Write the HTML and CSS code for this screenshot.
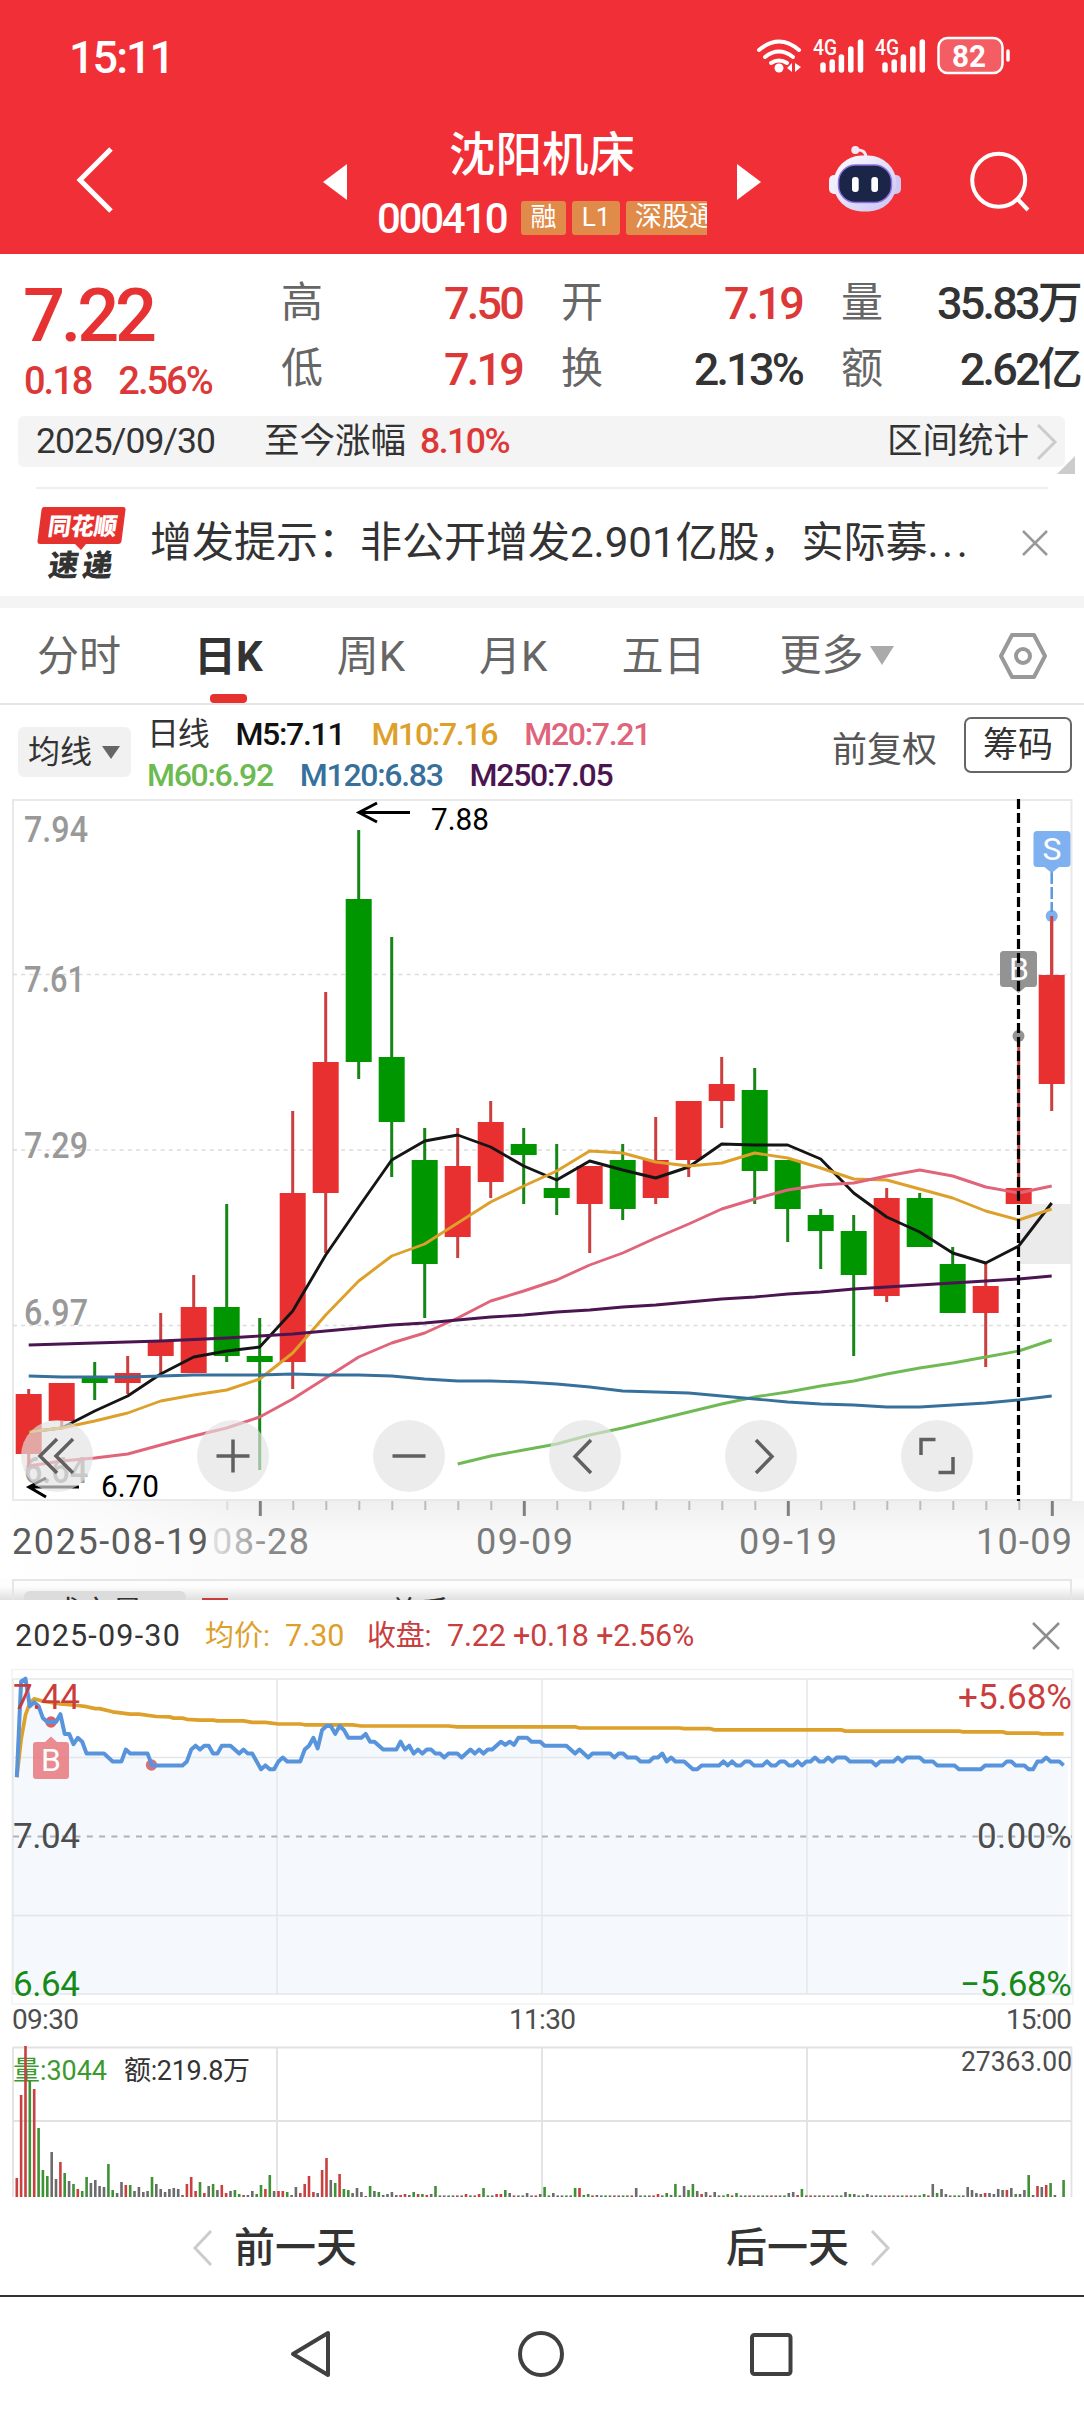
FILE: index.html
```html
<!DOCTYPE html>
<html lang="zh-CN">
<head>
    <meta charset="UTF-8">
    <meta name="viewport" content="width=device-width, initial-scale=1.0">
    <title>沈阳机床 000410</title>
    <link rel="stylesheet" href="styles.css">
</head>
<body>
    <header class="top">
        <div class="status">
            <span class="clock">15:11</span>
            <svg class="status-icons" width="260" height="44" viewBox="754 34 260 44">
                <g fill="none" stroke="#fff" stroke-width="4" stroke-linecap="round">
                    <path d="M759 50Q779 33 799 50"/>
                    <path d="M765 57Q779 46 793 57"/>
                    <path d="M771 63Q779 58 787 63"/>
                </g>
                <circle cx="779" cy="68" r="4.5" fill="#fff"/>
                <path d="M792 63v9l-5-4zM795 63v9l6-5z" fill="#fff"/>
                <g fill="#fff">
                    <text x="813" y="55" font-size="22" font-weight="500" textLength="24" lengthAdjust="spacingAndGlyphs">4G</text>
                    <text x="875" y="55" font-size="22" font-weight="500" textLength="24" lengthAdjust="spacingAndGlyphs">4G</text>
                </g>
                <g stroke="#fff" stroke-width="5.5" stroke-linecap="round">
                    <path d="M823 65v5M832.2 62v8M841.4 57v13M850.8 49v21M860.5 42v28"/>
                    <path d="M885 65v5M894.2 62v8M903.4 57v13M912.8 49v21M922.3 42v28"/>
                </g>
                <rect x="938.5" y="38" width="64" height="35" rx="9" fill="#f35d63" stroke="#fff" stroke-width="2.5"/>
                <path d="M1008 51v9" stroke="#fff" stroke-width="3.5" stroke-linecap="round"/>
                <text x="952" y="67" font-size="31" font-weight="700" fill="#fff" textLength="34" lengthAdjust="spacingAndGlyphs">82</text>
            </svg>
        </div>
        <div class="navbar">
            <svg class="back" width="40" height="68" viewBox="0 0 40 68"><path d="M35 3L4 34L35 65" fill="none" stroke="#fff" stroke-width="5"/></svg>
            <svg class="prev" width="24" height="36" viewBox="0 0 24 36"><path d="M24 0v36L0 18z" fill="#fff"/></svg>
            <div class="stock">
                <div class="stock-name">沈阳机床</div>
                <div class="stock-sub">
                    <span class="code num">000410</span>
                    <span class="badge">融</span>
                    <span class="badge badge-l1">L1</span>
                    <span class="badge badge-cut">深股通</span>
                </div>
            </div>
            <svg class="next" width="24" height="36" viewBox="0 0 24 36"><path d="M0 0v36L24 18z" fill="#fff"/></svg>
            <svg class="robot" width="74" height="68" viewBox="828 145 74 68">
                <defs>
                    <linearGradient id="shell" x1="0" y1="0" x2="1" y2="1">
                        <stop offset="0" stop-color="#ffffff"/>
                        <stop offset="1" stop-color="#c9c2f2"/>
                    </linearGradient>
                </defs>
                <path d="M856 150Q866 149 866 158" fill="none" stroke="#f3e9f5" stroke-width="3"/>
                <circle cx="855.3" cy="150" r="4" fill="#f3e9f5"/>
                <rect x="829" y="175" width="12" height="19" rx="5" fill="#f0effc"/>
                <rect x="889" y="175" width="12" height="19" rx="5" fill="#cfc8f3"/>
                <rect x="833.5" y="155.5" width="63" height="56" rx="28" fill="url(#shell)"/>
                <rect x="838.5" y="165" width="53" height="37.5" rx="17" fill="#1b2547" stroke="#8f6fe6" stroke-width="1.5"/>
                <rect x="852" y="177" width="6.7" height="15" rx="3" fill="#fff"/>
                <rect x="871.3" y="177" width="6.7" height="15" rx="3" fill="#fff"/>
            </svg>
            <svg class="search" width="64" height="64" viewBox="968 150 64 64"><g fill="none" stroke="#fff" stroke-width="4"><circle cx="998.7" cy="180.3" r="26.5"/><path d="M1017.5 199L1028 210"/></g></svg>
        </div>
    </header>

    <section class="quote">
        <div class="last">
            <div class="price num">7.22</div>
            <div class="change num"><span>0.18</span><span>2.56%</span></div>
        </div>
        <span class="label">高</span><span class="value num up">7.50</span>
        <span class="label">开</span><span class="value num up">7.19</span>
        <span class="label">量</span><span class="value num">35.83万</span>
        <span class="label">低</span><span class="value num up">7.19</span>
        <span class="label">换</span><span class="value num">2.13%</span>
        <span class="label">额</span><span class="value num">2.62亿</span>
    </section>

    <section class="range">
        <span class="range-date">2025/09/30</span>
        <span class="range-label">至今涨幅</span>
        <span class="range-pct num">8.10%</span>
        <span class="range-stat">区间统计</span>
        <svg width="22" height="38" viewBox="0 0 22 38"><path d="M2 2L19 19L2 36" fill="none" stroke="#ccc" stroke-width="3"/></svg>
        <i class="corner"></i>
    </section>

    <section class="news">
        <svg class="news-logo" width="92" height="76" viewBox="36 504 92 76">
            <path d="M44 506h79q3 0 2.500 3l-4 31q-.5 3-3.500 3H86l-5 6l-6-6H40q-3 0-2.500-3l4-31q.5-3 2.500-3z" fill="#e6322f"/>
            <g transform="skewX(-8)" font-weight="900" class="logo-text">
                <text x="122" y="534.5" font-size="24" fill="#fff" textLength="69" lengthAdjust="spacingAndGlyphs">同花顺</text>
                <text x="128" y="575" font-size="30" fill="#333">速</text>
                <text x="162" y="575" font-size="30" fill="#333">递</text>
            </g>
        </svg>
        <span class="news-text">增发提示：非公开增发2.901亿股，实际募<span class="dots">...</span></span>
        <svg width="26" height="26" viewBox="0 0 26 26"><path d="M1 1L25 25M25 1L1 25" stroke="#999" stroke-width="2.5"/></svg>
    </section>

    <nav class="tabs">
        <span class="tab">分时</span>
        <span class="tab active">日K</span>
        <span class="tab">周K</span>
        <span class="tab">月K</span>
        <span class="tab">五日</span>
        <span class="tab more">更多<i class="caret"></i></span>
        <svg class="gear" width="50" height="48" viewBox="0 0 50 48"><g fill="none" stroke="#999" stroke-width="4"><path d="M14 3H36L47 24L36 45H14L3 24Z" stroke-linejoin="round"/><circle cx="25" cy="24" r="7"/></g></svg>
    </nav>

    <section class="ma">
        <div class="ma-pick">均线<i class="caret small"></i></div>
        <div class="ma-list">
            <div class="ma-row"><span class="ma-name">日线</span><span class="m5">M5:7.11</span><span class="m10">M10:7.16</span><span class="m20">M20:7.21</span></div>
            <div class="ma-row"><span class="m60">M60:6.92</span><span class="m120">M120:6.83</span><span class="m250">M250:7.05</span></div>
        </div>
        <span class="adjust">前复权</span>
        <span class="chips">筹码</span>
    </section>

    <section class="kline">
        <svg id="kline" width="1084" height="702" viewBox="0 799 1084 702">
            <rect x="13" y="800" width="1058.5" height="700" fill="none" stroke="#e9e9e9" stroke-width="2"/>
            <g stroke="#dcdcdc" stroke-width="1.3" stroke-dasharray="4 4.2">
                <path d="M13 974.5H1071M13 1150H1071M13 1325.5H1071"/>
            </g>
            <g class="axis">
                <text x="24" y="842" textLength="64" lengthAdjust="spacingAndGlyphs">7.94</text>
                <text x="24" y="992" textLength="61" lengthAdjust="spacingAndGlyphs">7.61</text>
                <text x="24" y="1158" textLength="64" lengthAdjust="spacingAndGlyphs">7.29</text>
                <text x="24" y="1325" textLength="64" lengthAdjust="spacingAndGlyphs">6.97</text>
                <text x="24" y="1483" textLength="64" lengthAdjust="spacingAndGlyphs">6.64</text>
            </g>
            <rect x="1020" y="1204" width="51" height="60" fill="#ebebeb"/>
            <g id="candles"></g>
            <g id="averages" fill="none" stroke-width="2.9" stroke-linejoin="round"></g>
            <g fill="none" stroke="#000" stroke-width="3">
                <path d="M410 812.5H360M377 803L359 812.5L377 822"/>
                <path d="M79 1487H30M46 1478L29 1487L46 1497"/>
            </g>
            <g class="extreme">
                <text x="431" y="830" textLength="58" lengthAdjust="spacingAndGlyphs">7.88</text>
                <text x="101" y="1497" textLength="58" lengthAdjust="spacingAndGlyphs">6.70</text>
            </g>
            <g class="mark">
                <circle cx="1051.7" cy="916" r="6" fill="#7fb0f0"/>
                <path d="M1051.7 872V912" stroke="#5c97e0" stroke-width="2.5" stroke-dasharray="12 3"/>
                <path d="M1037 831h30q3.500 0 3.500 3.500v29q0 3.500-3.500 3.500h-8l-7.300 6l-7.300-6H1037q-3.500 0-3.500-3.500v-29q0-3.500 3.500-3.500z" fill="#7fb0f0"/>
                <text x="1052" y="860" text-anchor="middle">S</text>
                <circle cx="1018.5" cy="1036" r="6" fill="#939393"/>
                <path d="M1003.500 951h30q3.500 0 3.500 3.500v29q0 3.500-3.500 3.500h-8l-7 6l-7-6h-8q-3.500 0-3.500-3.500v-29q0-3.500 3.500-3.500z" fill="#939393"/>
                <text x="1019" y="980" text-anchor="middle">B</text>
            </g>
            <path d="M1051.700 916V980" stroke="#d04040" stroke-width="3"/>
            <path d="M1018.500 799V1501" stroke="#000" stroke-width="3.2" stroke-dasharray="10 4"/>
        </svg>
        <div class="tools">
            <span class="tool"><svg viewBox="0 0 72 72"><path d="M36 19L19 36L36 53M52 19L35 36L52 53"/></svg></span>
            <span class="tool"><svg viewBox="0 0 72 72"><path d="M36 19.500V52.500M19.500 36H52.500"/></svg></span>
            <span class="tool"><svg viewBox="0 0 72 72"><path d="M19.500 36H52.500"/></svg></span>
            <span class="tool"><svg viewBox="0 0 72 72"><path d="M42 20L26 36.500L42 53"/></svg></span>
            <span class="tool"><svg viewBox="0 0 72 72"><path d="M31 20L47 36.500L31 53"/></svg></span>
            <span class="tool"><svg viewBox="0 0 72 72"><path d="M34.500 19.500H20V35M52 37V52.500H37.500"/></svg></span>
        </div>
    </section>

    <section class="dates">
        <svg width="1084" height="78" viewBox="0 1501 1084 78">
            <defs>
                <linearGradient id="fade"><stop offset="0" stop-color="#888" stop-opacity=".2"/><stop offset=".6" stop-color="#888"/></linearGradient>
            </defs>
            <g id="ticks"></g>
            <text x="12" y="1554" fill="#5c5c5c" textLength="196">2025-08-19</text>
            <text x="212" y="1554" fill="url(#fade)" textLength="97">08-28</text>
            <text x="476" y="1554" fill="#7a7a7a" textLength="97">09-09</text>
            <text x="739" y="1554" fill="#7a7a7a" textLength="98">09-19</text>
            <text x="976" y="1554" fill="#7a7a7a" textLength="96">10-09</text>
        </svg>
    </section>

    <section class="sub">
        <div class="sub-box">
            <span class="sub-pick">成交量</span>
            <i class="sub-flag"></i>
            <span class="sub-text">总手</span>
        </div>
    </section>

    <section class="sheet">
        <div class="sheet-head">
            <span class="sheet-date">2025-09-30</span>
            <span class="sheet-avg"><b>均价:</b>7.30</span>
            <span class="sheet-close"><b>收盘:</b>7.22 +0.18 +2.56%</span>
            <svg width="28" height="28" viewBox="0 0 28 28"><path d="M1 1L27 27M27 1L1 27" stroke="#8e8e8e" stroke-width="2.5"/></svg>
        </div>
        <svg id="minute" width="1084" height="368" viewBox="0 1668 1084 368">
            <rect x="12" y="1669.5" width="1061" height="334.5" fill="none" stroke="#f3f3f3" stroke-width="1.5"/>
            <path id="area" fill="#f5f9fe"/>
            <path d="M13 1679H1072M13 1757.500H1072M13 1915.500H1072M13 1994H1072M13 1679V1994M277 1679V1994M542 1679V1994M807 1679V1994M1071.500 1679V1994" stroke="#e4e7ea" stroke-width="1.5"/>
            <path d="M13 1836.500H1072" stroke="#b0b3b6" stroke-width="1.8" stroke-dasharray="6 6.3"/>
            <g fill="none" stroke-linejoin="round">
                <path id="avg" stroke="#dda02a" stroke-width="3.7"/>
                <circle cx="51" cy="1722" r="5.7" fill="#d9606a"/>
                <circle cx="151.5" cy="1765" r="5.7" fill="#d9707f"/>
                <path id="price" stroke="#5794dc" stroke-width="4"/>
            </g>
            <g class="mark">
                <path d="M36 1742h9l6-5.500l6 5.500h9q3 0 3 3v31q0 3-3 3H36q-3 0-3-3v-31q0-3 3-3z" fill="#e67379" fill-opacity=".82"/>
                <text x="51" y="1771" text-anchor="middle">B</text>
            </g>
            <g class="scale">
                <text x="13" y="1709" fill="#cb3c3c" textLength="67">7.44</text>
                <text x="13" y="1848" fill="#4d4d4d" textLength="67">7.04</text>
                <text x="13" y="1996" fill="#178a17" textLength="67">6.64</text>
                <text x="958" y="1709" fill="#cb3c3c" textLength="114">+5.68%</text>
                <text x="977" y="1848" fill="#4d4d4d" textLength="95">0.00%</text>
                <text x="960" y="1996" fill="#178a17" textLength="112">−5.68%</text>
            </g>
            <g class="time">
                <text x="12" y="2029" textLength="67">09:30</text>
                <text x="509" y="2029" textLength="67">11:30</text>
                <text x="1006" y="2029" textLength="66">15:00</text>
            </g>
        </svg>
        <svg id="volume" width="1084" height="162" viewBox="0 2036 1084 162">
            <path d="M13 2047.500H1072M13 2121H1072M13 2047V2197M277 2047V2197M542 2047V2197M807 2047V2197M1071.500 2047V2197" stroke="#e2e2e2" stroke-width="1.8"/>
            <text x="13" y="2080" font-size="27" fill="#3c9a2f" textLength="94">量:3044</text>
            <text x="124" y="2080" font-size="27" fill="#333" textLength="126">额:219.8万</text>
            <text x="961" y="2071" font-size="28" fill="#4d4d4d" textLength="111" lengthAdjust="spacingAndGlyphs">27363.00</text>
            <g id="bars"></g>
        </svg>
        <div class="days">
            <span class="day"><svg width="22" height="38" viewBox="0 0 22 38"><path d="M19 2L3 19L19 36" fill="none" stroke="#ccc" stroke-width="3"/></svg>前一天</span>
            <span class="day">后一天<svg width="22" height="38" viewBox="0 0 22 38"><path d="M3 2L19 19L3 36" fill="none" stroke="#ccc" stroke-width="3"/></svg></span>
        </div>
    </section>

    <footer class="sysnav">
        <svg width="48" height="52" viewBox="0 0 48 52"><path d="M41 5V47L6 26Z" fill="none" stroke="#404040" stroke-width="4" stroke-linejoin="round"/></svg>
        <svg width="48" height="52" viewBox="0 0 48 52"><circle cx="24" cy="26" r="21" fill="none" stroke="#404040" stroke-width="4"/></svg>
        <svg width="48" height="52" viewBox="0 0 48 52"><rect x="5" y="7" width="38.5" height="39" rx="2.5" fill="none" stroke="#404040" stroke-width="4"/></svg>
    </footer>
    <script src="charts.js"></script>
</body>
</html>
```
FILE: styles.css
```css
* {
    box-sizing: border-box;
}
body {
    margin: 0;
    width: 1084px;
    height: 2412px;
    overflow: hidden;
    background: #fff;
    color: #333;
    font-family: Roboto, "Noto Sans CJK SC", sans-serif;
    line-height: 1;
    white-space: nowrap;
}
svg {
    display: block;
    flex: none;
    overflow: visible;
}
svg text {
    font-family: Roboto, "Noto Sans CJK SC", sans-serif;
}
i {
    display: block;
}
.num {
    font-weight: 500;
}
.up {
    color: #dd3838;
}

/* header */
.top {
    height: 254px;
    background: #f12f37;
    color: #fff;
}
.status {
    display: flex;
    justify-content: space-between;
    height: 112px;
    padding: 34px 70px 0 69px;
}
.clock {
    font-size: 45px;
    font-weight: 500;
    line-height: 47px;
    letter-spacing: -2px;
}
.navbar {
    display: flex;
    height: 142px;
}
.back {
    margin: 34px 0 0 76px;
}
.prev {
    margin: 52px 0 0 207px;
}
.stock {
    width: 330px;
    margin: 18px 30px 0 30px;
}
.stock-name {
    height: 50px;
    line-height: 50px;
    font-size: 46.5px;
    font-weight: 500;
    text-align: center;
}
.stock-sub {
    display: flex;
    height: 34px;
    margin-top: 21px;
    overflow: hidden;
    gap: 6px;
}
.code {
    flex: none;
    width: 138px;
    font-size: 42px;
    line-height: 36px;
    letter-spacing: -2.3px;
}
.badge {
    flex: none;
    width: 45px;
    height: 34px;
    border-radius: 3px;
    background: #e08b49;
    font-size: 26px;
    line-height: 33px;
    text-align: center;
}
.badge-l1 {
    width: 48px;
}
.badge-cut {
    width: 100px;
    padding-left: 9px;
    font-size: 27px;
    text-align: left;
}
.next {
    margin-top: 52px;
}
.robot {
    margin: 33px 0 0 67px;
}
.search {
    margin: 38px 0 0 66px;
}

/* quote */
.quote {
    display: grid;
    grid-template-columns: 255px 42px 199px 81px 199px 81px 197px;
    grid-template-rows: 66px 65px;
    height: 162px;
    padding: 16px 0 0 26px;
}
.last {
    grid-row: span 2;
}
.price {
    margin: 14px 0 0 -3px;
    font-size: 74px;
    line-height: 64px;
    letter-spacing: -4.2px;
    color: #e63232;
}
.change {
    display: flex;
    gap: 27px;
    margin: 9px 0 0 -2px;
    font-size: 38px;
    line-height: 48px;
    letter-spacing: -2px;
    color: #dd3838;
}
.label {
    font-size: 42px;
    line-height: 65px;
    text-align: right;
    color: #666;
}
.value {
    font-size: 45px;
    line-height: 68px;
    letter-spacing: -2.8px;
    text-align: right;
}

/* date range */
.range {
    position: relative;
    display: flex;
    align-items: center;
    width: 1047px;
    height: 51px;
    margin-left: 18px;
    padding: 0 7px 0 18px;
    border-radius: 6px;
    background: #f4f4f4;
    font-size: 35.5px;
}
.range-date {
    width: 228px;
    letter-spacing: -1px;
}
.range-pct {
    margin-left: 14px;
    color: #dd3838;
    letter-spacing: -1.5px;
}
.range-stat {
    margin: 0 7px 0 auto;
}
.corner {
    position: absolute;
    right: -10px;
    bottom: -7px;
    border: 9px solid transparent;
    border-right-color: #ccc;
    border-bottom-color: #ccc;
}

/* news */
.news {
    display: flex;
    align-items: center;
    width: 1012px;
    height: 109px;
    margin: 20px 0 0 36px;
    border-top: 2px solid #eee;
}
.logo-text text {
    font-family: "Noto Sans CJK SC", sans-serif;
}
.news-text {
    margin: 0 auto 0 22px;
    font-size: 42px;
}
.dots {
    letter-spacing: 3.5px;
}

/* tabs */
.tabs {
    display: flex;
    height: 109px;
    padding-left: 37px;
    border-top: 12px solid #f4f4f4;
    border-bottom: 2px solid #e6e6e6;
    font-size: 42px;
    line-height: 98px;
    color: #666;
}
.tab {
    position: relative;
    margin-right: 74px;
}
.tab.active {
    margin-left: -1px;
    font-weight: 700;
    color: #333;
}
.tab.active::after {
    content: "";
    position: absolute;
    left: 16px;
    bottom: 0;
    width: 37px;
    height: 9px;
    border-radius: 4px;
    background: #e6322f;
}
.more {
    display: flex;
    align-items: center;
    margin-right: 103px;
}
.caret {
    margin-left: 7px;
    border: 12px solid transparent;
    border-top: 19px solid #aaa;
    border-bottom: 0;
}
.caret.small {
    margin-left: 10px;
    border-width: 13px 9px 0;
    border-top-color: #666;
}
.gear {
    margin: 24px 0 0 1px;
}

/* moving averages */
.ma {
    display: flex;
    height: 94px;
    padding-left: 18px;
}
.ma-pick {
    display: flex;
    align-items: center;
    flex: none;
    width: 113px;
    height: 50px;
    margin-top: 22px;
    padding-left: 10px;
    border-radius: 6px;
    background: #f1f1f1;
    font-size: 32px;
}
.ma-list {
    flex: none;
    width: 701px;
    padding: 8px 0 0 16px;
    font-size: 32px;
    font-weight: 500;
}
.ma-row {
    display: flex;
    gap: 27px;
    height: 41px;
    line-height: 42px;
    letter-spacing: -1.3px;
}
.ma-name {
    font-size: 32px;
    font-weight: 400;
}
.m5 {
    color: #111;
}
.m10 {
    color: #dda02a;
}
.m20 {
    color: #e0647a;
}
.m60 {
    color: #6cba50;
}
.m120 {
    color: #37719b;
}
.m250 {
    color: #4a1550;
}
.adjust {
    margin-top: 28px;
    font-size: 35px;
    line-height: 36px;
    color: #555;
}
.chips {
    flex: none;
    width: 108px;
    height: 56px;
    margin: 12px 0 0 27px;
    border: 2px solid #666;
    border-radius: 7px;
    font-size: 35px;
    line-height: 54px;
    text-align: center;
}

/* daily chart */
.kline {
    position: relative;
    height: 702px;
}
.axis text {
    font-size: 36px;
    font-weight: 500;
    fill: #999;
}
.extreme text {
    font-size: 31px;
    fill: #000;
}
.mark text {
    font-size: 32px;
    fill: #fff;
}
.tools {
    position: absolute;
    left: 21px;
    bottom: 9px;
    display: flex;
    gap: 104px;
}
.tool {
    width: 72px;
    height: 72px;
    border-radius: 50%;
    background: rgba(226, 226, 226, .66);
}
.tool path {
    fill: none;
    stroke: #606060;
    stroke-width: 3.5;
}
.dates {
    height: 78px;
    background: linear-gradient(90deg, #fff, rgba(255, 255, 255, 0) 25%), linear-gradient(#efefef, #fafafa 50%);
}
.dates text {
    font-size: 36px;
    stroke: currentColor;
    stroke-width: 0;
}
.sub {
    height: 21px;
    padding: 0 12px;
    overflow: hidden;
    background: linear-gradient(#fdfdfd 35%, #e0e0e0);
}
.sub-box {
    display: flex;
    height: 40px;
    border: 2px solid #e6e6e6;
}
.sub-pick {
    width: 162px;
    height: 30px;
    margin: 10px 0 0 10px;
    padding: 6px 0 0 26px;
    border-radius: 6px;
    background: #dcdcdc;
    font-size: 31px;
}
.sub-flag {
    width: 26px;
    height: 12px;
    margin: 17px 0 0 16px;
    background: #c83c3c;
}
.sub-text {
    margin: 16px 0 0 160px;
    font-size: 31px;
}

/* intraday sheet */
.sheet-head {
    display: flex;
    align-items: center;
    height: 68px;
    padding: 4px 24px 0 15px;
    font-size: 30.5px;
}
.sheet-head b {
    font-weight: 400;
}
.sheet-date {
    width: 190px;
    letter-spacing: 1.2px;
}
.sheet-avg {
    width: 162px;
    color: #dda02a;
}
.sheet-avg b, .sheet-close b {
    display: inline-block;
    width: 80px;
    font-size: 29px;
}
.sheet-close {
    margin-right: auto;
    letter-spacing: -.2px;
    color: #c93e3e;
}
.scale text {
    font-size: 35px;
}
.time text {
    font-size: 28px;
    fill: #4d4d4d;
}
.days {
    display: flex;
    justify-content: space-between;
    height: 97px;
    padding: 3px 193px 0 192px;
    font-size: 41px;
    font-weight: 500;
}
.day {
    display: flex;
    align-items: center;
    gap: 20px;
}

/* system keys */
.sysnav {
    display: flex;
    justify-content: space-between;
    height: 117px;
    padding: 31px 289px 0 287px;
    border-top: 2px solid #333;
}
```
FILE: charts.js
```js
const RED = "#e83030";
const GREEN = "#009600";

// body top, body bottom, wick top, wick bottom, in chart units
const candles = [
    ["r", 1394, 1454, 1389, 1467], ["r", 1383, 1421, 1383, 1427], ["g", 1378, 1383, 1362, 1400],
    ["r", 1373, 1383, 1356, 1394], ["r", 1342, 1356, 1313, 1373], ["r", 1307, 1373, 1275, 1373],
    ["g", 1307, 1356, 1204, 1362], ["g", 1356, 1362, 1318, 1470], ["r", 1193, 1362, 1111, 1389],
    ["r", 1062, 1193, 992, 1253], ["g", 899, 1062, 830, 1079], ["g", 1057, 1122, 937, 1177],
    ["g", 1160, 1264, 1128, 1318], ["r", 1166, 1237, 1128, 1258], ["r", 1122, 1182, 1101, 1198],
    ["g", 1144, 1155, 1128, 1204], ["g", 1188, 1198, 1144, 1215], ["r", 1166, 1204, 1166, 1253],
    ["g", 1160, 1209, 1144, 1220], ["r", 1160, 1198, 1117, 1204], ["r", 1101, 1160, 1101, 1177],
    ["r", 1084, 1101, 1057, 1128], ["g", 1090, 1171, 1068, 1204], ["g", 1160, 1209, 1160, 1242],
    ["g", 1215, 1231, 1209, 1269], ["g", 1231, 1275, 1215, 1356], ["r", 1198, 1296, 1188, 1302],
    ["g", 1198, 1247, 1193, 1247], ["g", 1264, 1313, 1247, 1313], ["r", 1286, 1313, 1264, 1367],
    ["r", 1188, 1204, 1035, 1204], ["r", 975, 1084, 916, 1111]
];

const averages = [
    { color: "#151515", from: 0, y: [1432, 1428, 1411, 1396, 1374, 1357, 1351, 1347, 1311, 1255, 1207, 1160, 1141, 1135, 1147, 1166, 1180, 1161, 1170, 1178, 1167, 1144, 1145, 1145, 1159, 1193, 1217, 1232, 1253, 1263, 1246, 1203] },
    { color: "#dda02a", from: 0, y: [1432, 1428, 1421, 1413, 1401, 1395, 1390, 1379, 1353, 1315, 1281, 1256, 1244, 1223, 1202, 1186, 1171, 1151, 1153, 1162, 1166, 1163, 1153, 1158, 1168, 1179, 1180, 1189, 1198, 1211, 1220, 1209] },
    { color: "#e0647a", from: 0, y: [1466, 1461, 1458, 1454, 1445, 1436, 1428, 1417, 1399, 1378, 1357, 1343, 1333, 1318, 1301, 1291, 1280, 1265, 1253, 1238, 1224, 1209, 1199, 1190, 1185, 1183, 1176, 1170, 1176, 1187, 1193, 1186] },
    { color: "#70ba55", from: 13, y: [1464, 1456, 1450, 1444, 1435, 1428, 1420, 1412, 1404, 1397, 1392, 1386, 1381, 1374, 1368, 1363, 1357, 1351, 1340] },
    { color: "#37719b", from: 0, y: [1376, 1377, 1377, 1377, 1376, 1375, 1375, 1375, 1374, 1375, 1375, 1376, 1379, 1381, 1381, 1382, 1384, 1387, 1391, 1392, 1393, 1396, 1399, 1402, 1404, 1405, 1407, 1407, 1405, 1403, 1400, 1396] },
    { color: "#4a1550", from: 0, y: [1345, 1344, 1343, 1342, 1341, 1339.5, 1338, 1336, 1334, 1331, 1328, 1325, 1323, 1320, 1317, 1315, 1312, 1310, 1307, 1305, 1302, 1299, 1297, 1294, 1292, 1289, 1287, 1285, 1283, 1281, 1279, 1276] }
];

const dayX = i => 28.7 + 33 * i;

document.getElementById("candles").innerHTML = candles.map(([c, top, bottom, high, low], i) => {
    const x = dayX(i);
    const red = c === "r";
    return `<path d="M${x} ${high}V${low}" stroke="${red ? "#cb3f3f" : "#168616"}" stroke-width="3"/>` +
        `<rect x="${x - 13}" y="${top}" width="26" height="${bottom - top}" fill="${red ? RED : GREEN}"/>`;
}).join("");

document.getElementById("averages").innerHTML = averages.map(line => {
    const points = line.y.map((y, i) => `${dayX(line.from + i)},${y}`).join(" ");
    return `<polyline points="${points}" stroke="${line.color}"/>`;
}).join("");

let ticks = "";
for (let i = 6; i < 32; i++) {
    const major = i % 8 === 7;
    const color = major ? "#808080" : i === 6 ? "#ddd" : "#bcbcbc";
    ticks += `<path d="M${dayX(i) + 0.6} 1501V${major ? 1516 : 1510}" stroke="${color}" stroke-width="${major ? 3 : 2}"/>`;
}
document.getElementById("ticks").innerHTML = ticks;

// minute, price in cents
const price = [
    [1, 719], [2, 743.3], [3, 744], [4, 737], [5, 738], [6, 737], [7, 734], [8, 733], [10, 733], [11, 735], [12, 730], [13, 730],
    [14, 727.4], [15, 729], [16, 728], [17, 725], [21, 725], [23, 723], [25, 723], [26, 726], [27, 725], [31, 725], [32, 722], [39, 722],
    [40, 723], [41, 726], [42, 727], [43, 726], [44, 727], [45, 727], [46, 725], [47, 725], [48, 727], [50, 727], [52, 725], [53, 726],
    [54, 725], [55, 725], [57, 721], [58, 722], [59, 721], [60, 721], [61, 723], [62, 724], [63, 723], [66, 723], [67, 726], [68, 727],
    [69, 729], [70, 726.3], [71, 731], [72, 732], [73, 732], [74, 730], [75, 732], [76, 731], [77, 729], [80, 729], [81, 730], [82, 728],
    [83, 728], [85, 726], [88, 726], [89, 728], [90, 726], [91, 727], [92, 725], [93, 726], [94, 725], [95, 726], [96, 726], [97, 725],
    [98, 725], [99, 724], [100, 725], [102, 725], [103, 724], [105, 726], [106, 725], [107, 726], [108, 725], [109, 726], [110, 726],
    [112, 728], [113, 727.2], [114, 728], [115, 727.2], [116, 729], [118, 729], [119, 728], [121, 728], [122, 727], [127, 727], [129, 725],
    [130, 726], [132, 724], [133, 725], [137, 725], [138, 724], [139, 725], [140, 725], [141, 724], [143, 724], [144, 723], [146, 723],
    [147, 724], [148, 724], [149, 725], [150, 723], [151, 724], [152, 723], [154, 723], [156, 721], [157, 721], [158, 722], [162, 722],
    [163, 723], [164, 722], [165, 723], [166, 722], [167, 722], [168, 723], [169, 723], [170, 722], [172, 722], [173, 723], [174, 722],
    [175, 722], [176, 723], [177, 723], [178, 722], [179, 722], [180, 723], [181, 722], [182, 723], [183, 723], [184, 724], [185, 723],
    [186, 723], [187, 724], [188, 723], [189, 724], [191, 724], [192, 723], [197, 723], [198, 722], [199, 723], [202, 723], [203, 724],
    [204, 723], [205, 724], [208, 724], [209, 723], [211, 723], [212, 722], [216, 722], [217, 721], [222, 721], [223, 722], [227, 722],
    [228, 723], [229, 723], [230, 722], [232, 722], [233, 721], [234, 721], [235, 723], [236, 723], [237, 724], [238, 723], [240, 723], [241, 722]
];
const avg = [
    [1, 719], [2, 728.5], [3, 734.8], [4, 737.8], [5, 738.9], [7, 738.3], [11, 737.6], [15, 737.2], [17, 736.9], [19, 736.4], [20, 736.4],
    [23, 735.6], [27, 735], [29, 735], [33, 734.4], [36, 734.3], [37, 734], [39, 734], [40, 733.7], [43, 733.5], [46, 733.5], [47, 733.3],
    [53, 733.3], [55, 732.9], [58, 732.9], [61, 732.5], [66, 732.5], [67, 732.3], [78, 732.3], [80, 732], [100, 732], [102, 731.8],
    [129, 731.8], [130, 731.5], [153, 731.5], [154, 731.3], [160, 731.3], [161, 731], [190, 731], [191, 730.7], [217, 730.7], [218, 730.5],
    [227, 730.5], [228, 730.2], [235, 730.2], [236, 730], [241, 730]
];

const minX = m => 12.4 + 4.362 * m;
const minY = p => 1836.3 - (p - 704) * 3.94;
const path = list => "M" + list.map(([m, p]) => minX(m).toFixed(1) + " " + minY(p).toFixed(1)).join("L");

document.getElementById("price").setAttribute("d", path(price));
document.getElementById("avg").setAttribute("d", path(avg));
document.getElementById("area").setAttribute("d", path(price) + "L1068 1765V1994H13V1775Z");

// first part of the session, bar by bar
const opening = ("r19 r102 r151 g116 r108 g69 g27 g21 k45 k18 r35 g24 k16 g13 r8 g6 g20 k14 k17 k11 k10 g33 g7 k4 k15 r12 g12 k6 k10 k5 " +
    "k6 g20 k13 k8 k5 k8 k9 k8 k2 r13 r20 r6 g15 r4 k11 g13 k7 r12 r4 k6 g7 g3 r2 k2 k6 g3 g12 r8 g22 k6 " +
    "r6 r6 g5 k2 k10 r4 r13 r21 r5 k4 r27 r39 k17 g14 r23 g8 g7 k4 k9 k5 r1 g11 k6 g5 k2 k3 k5 k2 r2 r3 " +
    "k2 g5 r3 g3 r2 k3 g11").split(" ");
const later = {
    104: "r3", 107: "r3", 108: "g9", 111: "r3", 112: "r3", 113: "g7", 114: "k4", 118: "k4", 121: "k3", 122: "g10", 124: "k4",
    129: "g9", 130: "r9", 131: "g2", 132: "g3", 134: "k2", 143: "k9", 148: "r3", 150: "g4", 151: "k2", 152: "g13", 154: "k11", 155: "g7", 156: "g13",
    157: "k6", 158: "r3", 159: "k5", 161: "k5", 164: "g3", 166: "g4", 178: "k4", 179: "k5", 180: "r2", 181: "g8", 191: "k5",
    192: "g3", 193: "k3", 196: "k3", 209: "g3", 211: "k13", 212: "g4", 213: "k8", 214: "k3", 219: "k10", 220: "k7", 221: "k4", 222: "k3", 223: "r4",
    224: "k4", 225: "k3", 226: "k8", 227: "k7", 228: "r7", 229: "k9", 230: "g3", 231: "k3", 232: "k7", 233: "g22", 234: "k2", 235: "r11", 236: "k10",
    237: "r12", 238: "g14", 239: "k2", 240: "k0", 241: "g17"
};
const barColors = { r: "#c94040", g: "#3f9136", k: "#6c6c6c" };
let bars = "";
for (let m = 1; m <= 241; m++) {
    const bar = opening[m - 1] || later[m] || "kgkrkkgrk"[m % 9] + "1.6";
    const h = parseFloat(bar.slice(1));
    bars += `<rect x="${(minX(m) - 1.3).toFixed(1)}" y="${2197 - h}" width="2.6" height="${h}" fill="${barColors[bar[0]]}"/>`;
}
document.getElementById("bars").innerHTML = bars;
```
